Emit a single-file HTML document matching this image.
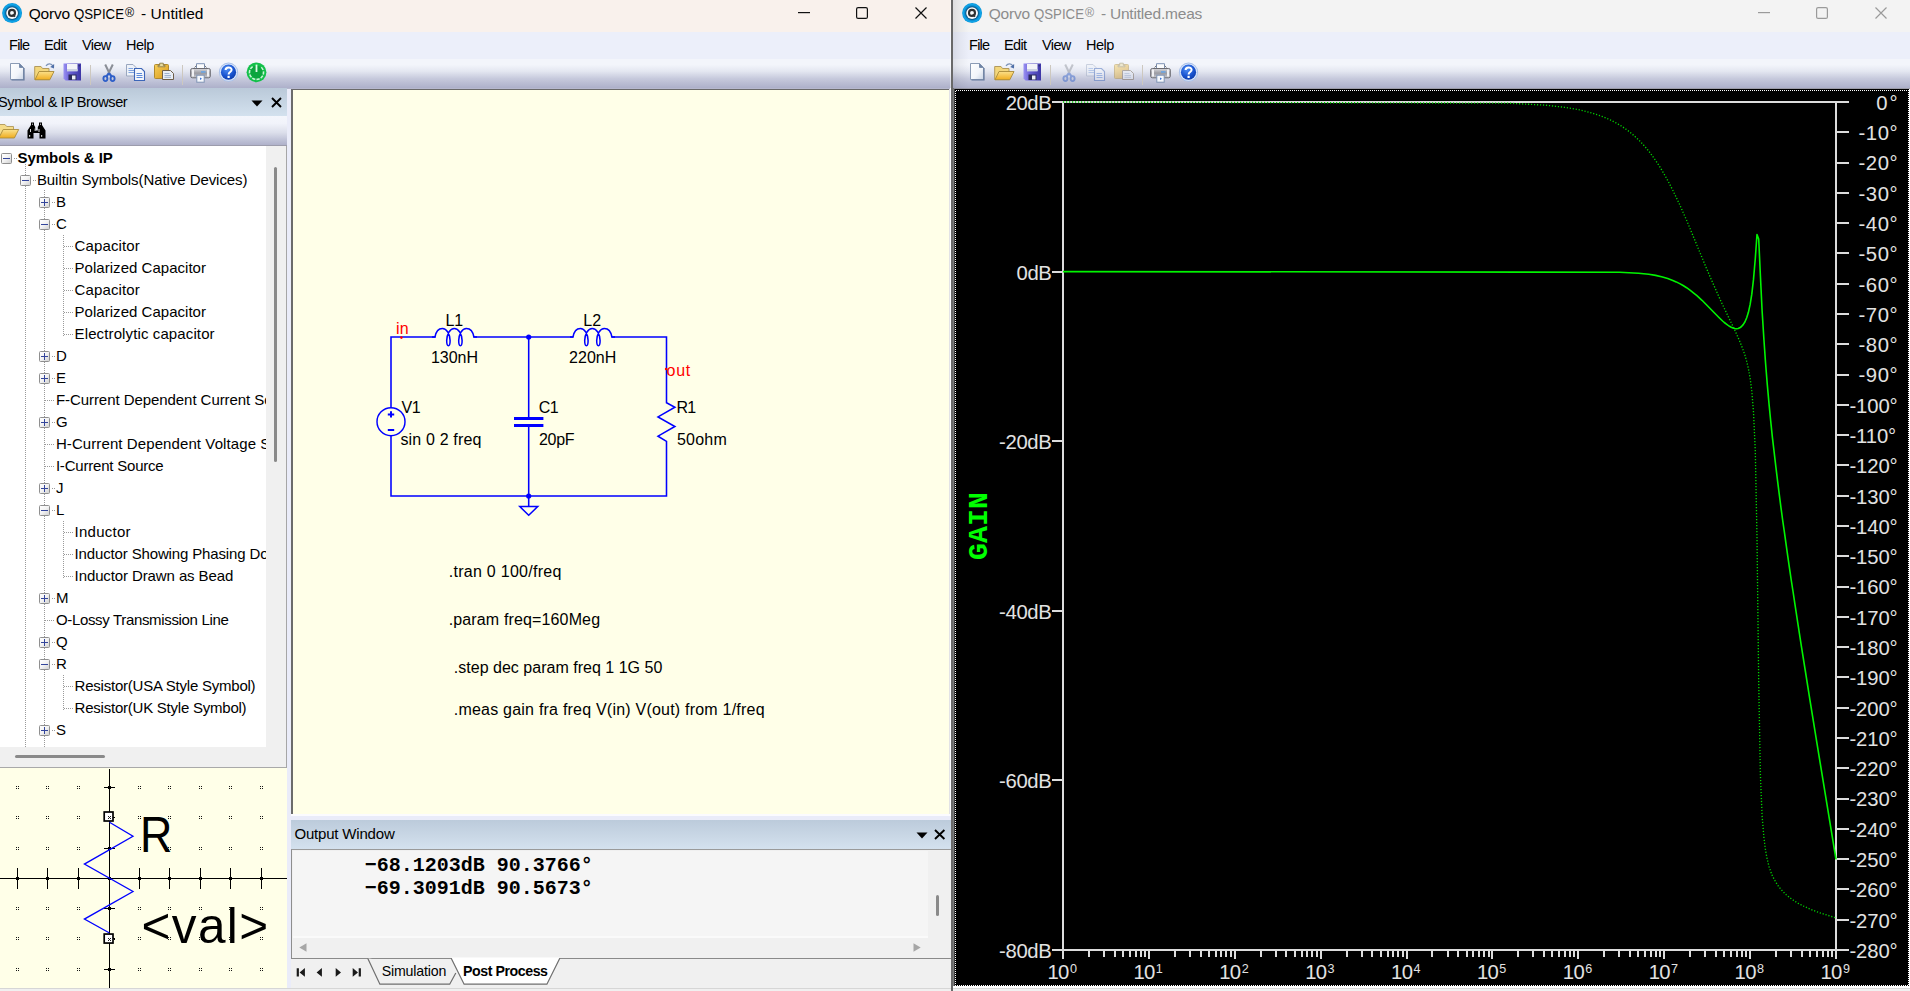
<!DOCTYPE html>
<html><head><meta charset="utf-8"><title>Qorvo QSPICE</title>
<style>
*{box-sizing:border-box;margin:0;padding:0}
html,body{width:1910px;height:991px;overflow:hidden;background:#f0f0f0}
body{position:relative;font-family:"Liberation Sans",sans-serif;font-size:15px;color:#000}
.a{position:absolute}
.t{position:absolute;white-space:nowrap;line-height:1}
.tb{top:59px;height:29px;background:linear-gradient(#f3f5fb 0,#f3f5fb 20%,#e4e7f1 42%,#c6c9dc 68%,#adb0ca 100%)}
svg{position:absolute;overflow:visible}
</style></head><body>
<!-- left window chrome -->
<div class="a" style="left:0px;top:0px;width:951px;height:32px;background:#f9f1ec;"></div>
<div class="a" style="left:0px;top:32px;width:951px;height:27px;background:#eceffa;"></div>
<div class="a tb" style="left:0;width:951px"></div>
<!-- right window chrome -->
<div class="a" style="left:953px;top:0px;width:957px;height:32px;background:#f3f3f3;"></div>
<div class="a" style="left:953px;top:32px;width:957px;height:27px;background:#eceffa;"></div>
<div class="a tb" style="left:953px;width:957px"></div>
<div class="a" style="left:950px;top:0px;width:1px;height:88px;background:rgba(255,255,255,0.45);"></div>
<div class="a" style="left:950px;top:88px;width:1px;height:726px;background:#fcfcff;"></div>
<div class="a" style="left:0px;top:88px;width:950px;height:1px;background:#b6b8ce;"></div>
<div class="a" style="left:954px;top:88px;width:956px;height:1px;background:#9c9ca8;"></div>
<div class="a" style="left:951px;top:0px;width:2px;height:991px;background:#696969;"></div>
<div class="a" style="left:953px;top:88px;width:1px;height:903px;background:#7c7c7c;"></div>
<div class="a" style="left:953px;top:0px;width:16px;height:89px;background:linear-gradient(90deg,rgba(0,0,20,0.085),rgba(0,0,20,0.04) 45%,rgba(0,0,0,0));"></div>
<svg style="left:1.8000000000000007px;top:2.8000000000000007px" width="20.2" height="20.2" viewBox="0 0 20.2 20.2">
<defs><radialGradient id="lg11.9" cx="50%" cy="50%" r="50%"><stop offset="0.55" stop-color="#07395e"/><stop offset="0.72" stop-color="#0a86c9"/><stop offset="0.86" stop-color="#0fa6ea"/><stop offset="1" stop-color="#0b93d6"/></radialGradient></defs>
<circle cx="10.1" cy="10.1" r="10" fill="url(#lg11.9)"/>
<circle cx="10.1" cy="10.1" r="5.9" fill="#f7fbfd"/>
<circle cx="10" cy="9.9" r="3" fill="none" stroke="#2f3133" stroke-width="2.1"/>
<path d="M10.9 11.2 L12.9 13.8" stroke="#2f3133" stroke-width="1.7"/>
</svg>
<svg style="left:961.8px;top:2.8000000000000007px" width="20.2" height="20.2" viewBox="0 0 20.2 20.2">
<defs><radialGradient id="lg971.9" cx="50%" cy="50%" r="50%"><stop offset="0.55" stop-color="#07395e"/><stop offset="0.72" stop-color="#0a86c9"/><stop offset="0.86" stop-color="#0fa6ea"/><stop offset="1" stop-color="#0b93d6"/></radialGradient></defs>
<circle cx="10.1" cy="10.1" r="10" fill="url(#lg971.9)"/>
<circle cx="10.1" cy="10.1" r="5.9" fill="#f7fbfd"/>
<circle cx="10" cy="9.9" r="3" fill="none" stroke="#2f3133" stroke-width="2.1"/>
<path d="M10.9 11.2 L12.9 13.8" stroke="#2f3133" stroke-width="1.7"/>
</svg>
<div class="t" style="left:28.70px;top:6.05px;font-size:15.5px;letter-spacing:-0.202px;">Qorvo</div>
<div class="t" style="left:73.80px;top:6.05px;font-size:15.5px;transform:scaleX(0.8536);transform-origin:0 0;">QSPICE</div>
<div class="t" style="left:124.90px;top:7.10px;font-size:12.4px;">®</div>
<div class="t" style="left:140.90px;top:6.05px;font-size:15.5px;letter-spacing:0.058px;">- Untitled</div>
<div class="t" style="left:988.70px;top:6.05px;font-size:15.5px;color:#8c8c8c;letter-spacing:-0.202px;">Qorvo</div>
<div class="t" style="left:1033.80px;top:6.05px;font-size:15.5px;color:#8c8c8c;transform:scaleX(0.8536);transform-origin:0 0;">QSPICE</div>
<div class="t" style="left:1084.90px;top:7.10px;font-size:12.4px;color:#8c8c8c;">®</div>
<div class="t" style="left:1100.90px;top:6.05px;font-size:15.5px;color:#8c8c8c;letter-spacing:-0.202px;">- Untitled.meas</div>
<div class="t" style="left:9.10px;top:38.05px;font-size:14.5px;letter-spacing:-0.791px;">File</div>
<div class="t" style="left:44.00px;top:38.05px;font-size:14.5px;letter-spacing:-0.647px;">Edit</div>
<div class="t" style="left:82.10px;top:38.05px;font-size:14.5px;letter-spacing:-0.642px;">View</div>
<div class="t" style="left:126.00px;top:38.05px;font-size:14.5px;letter-spacing:-0.481px;">Help</div>
<div class="t" style="left:969.10px;top:38.05px;font-size:14.5px;letter-spacing:-0.791px;">File</div>
<div class="t" style="left:1004.00px;top:38.05px;font-size:14.5px;letter-spacing:-0.647px;">Edit</div>
<div class="t" style="left:1042.10px;top:38.05px;font-size:14.5px;letter-spacing:-0.642px;">View</div>
<div class="t" style="left:1086.00px;top:38.05px;font-size:14.5px;letter-spacing:-0.481px;">Help</div>
<svg style="left:798px;top:12px" width="13" height="2"><rect x="0" y="0" width="12" height="1.2" fill="#111"/></svg>
<svg style="left:856px;top:7px" width="13" height="13"><rect x="0.6" y="0.6" width="10.8" height="10.8" rx="1.5" fill="none" stroke="#111" stroke-width="1.2"/></svg>
<svg style="left:915px;top:7px" width="13" height="13"><path d="M0.5 0.5 L11.5 11.5 M11.5 0.5 L0.5 11.5" stroke="#111" stroke-width="1.2" fill="none"/></svg>
<svg style="left:1758px;top:12px" width="13" height="2"><rect x="0" y="0" width="12" height="1.2" fill="#9a9a9a"/></svg>
<svg style="left:1816px;top:7px" width="13" height="13"><rect x="0.6" y="0.6" width="10.8" height="10.8" rx="1.5" fill="none" stroke="#9a9a9a" stroke-width="1.2"/></svg>
<svg style="left:1875px;top:7px" width="13" height="13"><path d="M0.5 0.5 L11.5 11.5 M11.5 0.5 L0.5 11.5" stroke="#9a9a9a" stroke-width="1.2" fill="none"/></svg>
<svg style="left:10px;top:63px" width="15" height="18" viewBox="0 0 15 18">
<defs><linearGradient id="nd0" x1="0" y1="0" x2="1" y2="1"><stop offset="0" stop-color="#ffffff"/><stop offset="0.6" stop-color="#f2f5fa"/><stop offset="1" stop-color="#c9d3e4"/></linearGradient></defs>
<path d="M0.5 0.5 H9.5 L13.5 4.5 V16.5 H0.5 Z" fill="url(#nd0)" stroke="#8b9bb5" stroke-width="1"/>
<path d="M9.5 0.5 V4.5 H13.5" fill="#6f84a6" stroke="#6f84a6" stroke-width="0.8"/>
<path d="M14 5 V17 H1.5" fill="none" stroke="#62779b" stroke-width="1.2"/>
</svg>
<svg style="left:34px;top:62px" width="21" height="19" viewBox="0 0 21 19">
<defs><linearGradient id="of0" x1="0" y1="0" x2="0" y2="1"><stop offset="0" stop-color="#fbe08a"/><stop offset="1" stop-color="#f0ad1e"/></linearGradient></defs>
<path d="M0.7 4.5 H7 L8.5 6.5 H15 V17.5 H0.7 Z" fill="#f3d77c" stroke="#b39b5d" stroke-width="1"/>
<path d="M5 9.5 H20 L15.8 17.8 H1 Z" fill="url(#of0)" stroke="#a88a3a" stroke-width="0.9"/>
<path d="M12 3.8 C14 1.2 17.5 1.4 19 4.2" fill="none" stroke="#7b93b8" stroke-width="1.3"/>
<path d="M20.2 2 L20 6.4 L16.2 5 Z" fill="#4f6fa8"/>
</svg>
<svg style="left:63px;top:63px" width="19" height="18" viewBox="0 0 19 18">
<defs><linearGradient id="sv0" x1="0" y1="0" x2="1" y2="0"><stop offset="0" stop-color="#9a92f2"/><stop offset="0.35" stop-color="#6a60d6"/><stop offset="1" stop-color="#3d36a6"/></linearGradient></defs>
<path d="M0.5 0.5 H18 V17.5 H2.5 L0.5 15.5 Z" fill="url(#sv0)"/>
<rect x="4" y="1" width="10.5" height="7.2" fill="#f3f4f8"/>
<rect x="4" y="6" width="10.5" height="2.2" fill="#ccd2e2"/>
<rect x="5.5" y="11.5" width="8" height="5.5" fill="#2b2b5a"/>
<rect x="9" y="12.5" width="3.5" height="4" fill="#eceef6"/>
<rect x="15.6" y="2" width="1.2" height="1.4" fill="#2b2b6a"/>
</svg>
<div class="a" style="left:90px;top:65px;width:1px;height:20px;background:#cdc8bf;"></div>
<svg style="left:102px;top:64px" width="14" height="19" viewBox="0 0 14 19">
<path d="M3.2 0.5 L7.8 10 M10.8 0.5 L6.2 10" stroke="#8a8e96" stroke-width="2" fill="none"/>
<ellipse cx="3.4" cy="14.6" rx="2" ry="2.5" fill="none" stroke="#2f5fc8" stroke-width="1.9"/>
<ellipse cx="10.6" cy="14.6" rx="2" ry="2.5" fill="none" stroke="#2f5fc8" stroke-width="1.9"/>
<path d="M7 9.3 L4.3 12.4 M7 9.3 L9.7 12.4" stroke="#2f5fc8" stroke-width="2.2"/>
</svg>
<svg style="left:126px;top:64px" width="20" height="17" viewBox="0 0 20 17">
<path d="M0.5 0.5 H7 L10 3.5 V12 H0.5 Z" fill="#eef2f9" stroke="#9aa7bf" stroke-width="1"/>
<path d="M2.5 4.5 H7 M2.5 6.5 H8 M2.5 8.5 H8" stroke="#7fa3de" stroke-width="1"/>
<path d="M8.5 4.5 H15.5 L18.5 7.5 V16.5 H8.5 Z" fill="#f4f7fc" stroke="#3d66b8" stroke-width="1.1"/>
<path d="M10.5 9.5 H16 M10.5 11.5 H16.5 M10.5 13.5 H16.5" stroke="#5c8ada" stroke-width="1.1"/>
</svg>
<svg style="left:154px;top:62px" width="21" height="19" viewBox="0 0 21 19">
<defs><linearGradient id="ps0" x1="0" y1="0" x2="1" y2="1"><stop offset="0" stop-color="#f6cf5a"/><stop offset="1" stop-color="#d9991a"/></linearGradient></defs>
<rect x="0.5" y="2.5" width="14" height="14" rx="1" fill="url(#ps0)" stroke="#b08a2e" stroke-width="1"/>
<path d="M4 4.8 H11 V3.4 H9.3 V1.2 H5.7 V3.4 H4 Z" fill="#e8dca0" stroke="#8d7d48" stroke-width="0.9"/>
<path d="M8.5 8.5 H16.5 L19.5 11.5 V17.5 H8.5 Z" fill="#e9eef6" stroke="#6f5f4a" stroke-width="1"/>
<path d="M10.5 11.5 H15.5 M10.5 13.5 H17 M10.5 15.3 H17" stroke="#9fb2cf" stroke-width="1"/>
</svg>
<div class="a" style="left:182px;top:65px;width:1px;height:20px;background:#cdc8bf;"></div>
<svg style="left:190px;top:63px" width="21" height="20" viewBox="0 0 21 20">
<defs><linearGradient id="pr0" x1="0" y1="0" x2="0" y2="1"><stop offset="0" stop-color="#d8d8dc"/><stop offset="0.5" stop-color="#9b9ba2"/><stop offset="1" stop-color="#c9c9cf"/></linearGradient></defs>
<path d="M6.5 0.7 H14.5 V6 H6.5 Z" fill="#fbfcfe" stroke="#7f93b4" stroke-width="1"/>
<path d="M4.5 4.5 L6.5 2.5 M16.5 4.5 L14.5 2.5" stroke="#777" stroke-width="1"/>
<rect x="0.7" y="5.5" width="19.6" height="9.3" rx="1.6" fill="url(#pr0)" stroke="#6b6b72" stroke-width="1"/>
<rect x="1.8" y="6.5" width="2.2" height="7" fill="#f1f1f4"/><rect x="17" y="6.5" width="2.2" height="7" fill="#f1f1f4"/>
<rect x="11" y="8.3" width="4.6" height="1.3" fill="#5aa2ee"/>
<rect x="6.8" y="12.2" width="7.4" height="7" fill="#f7f9fd" stroke="#7f93b4" stroke-width="1"/>
<path d="M10 14.5 L12 15.8 L10 17 Z" fill="#3a74d8"/>
</svg>
<svg style="left:218px;top:62px" width="21" height="21" viewBox="0 0 21 21">
<defs><radialGradient id="hp0" cx="40%" cy="30%" r="75%"><stop offset="0" stop-color="#4f8ff5"/><stop offset="0.6" stop-color="#1a54d0"/><stop offset="1" stop-color="#0c3ba8"/></radialGradient></defs>
<circle cx="10.5" cy="10.2" r="9.6" fill="#a9c1ea"/>
<circle cx="10.5" cy="10.2" r="8.6" fill="#dfe9fb"/>
<circle cx="10.5" cy="10.2" r="7.6" fill="url(#hp0)"/>
<path d="M7.6 8 C7.6 4.6 13.6 4.6 13.6 7.8 C13.6 10 10.6 10 10.6 12.4" fill="none" stroke="#fff" stroke-width="2"/>
<rect x="9.5" y="13.8" width="2.2" height="2.2" fill="#fff"/>
</svg>
<svg style="left:246px;top:62px" width="21" height="21" viewBox="0 0 21 21">
<circle cx="10.5" cy="10.3" r="9.9" fill="#13c04a"/>
<circle cx="10.5" cy="10.3" r="6.6" fill="#0ca53e"/>
<path d="M6.6 4.6 A7 7 0 1 0 14.4 4.6" fill="none" stroke="#c9f5d6" stroke-width="1.6" stroke-dasharray="3.2 1.2"/>
<path d="M10.5 2.6 V10" stroke="#dffbe8" stroke-width="1.8"/>
</svg>
<svg style="left:970px;top:63px" width="15" height="18" viewBox="0 0 15 18">
<defs><linearGradient id="nd960" x1="0" y1="0" x2="1" y2="1"><stop offset="0" stop-color="#ffffff"/><stop offset="0.6" stop-color="#f2f5fa"/><stop offset="1" stop-color="#c9d3e4"/></linearGradient></defs>
<path d="M0.5 0.5 H9.5 L13.5 4.5 V16.5 H0.5 Z" fill="url(#nd960)" stroke="#8b9bb5" stroke-width="1"/>
<path d="M9.5 0.5 V4.5 H13.5" fill="#6f84a6" stroke="#6f84a6" stroke-width="0.8"/>
<path d="M14 5 V17 H1.5" fill="none" stroke="#62779b" stroke-width="1.2"/>
</svg>
<svg style="left:994px;top:62px" width="21" height="19" viewBox="0 0 21 19">
<defs><linearGradient id="of960" x1="0" y1="0" x2="0" y2="1"><stop offset="0" stop-color="#fbe08a"/><stop offset="1" stop-color="#f0ad1e"/></linearGradient></defs>
<path d="M0.7 4.5 H7 L8.5 6.5 H15 V17.5 H0.7 Z" fill="#f3d77c" stroke="#b39b5d" stroke-width="1"/>
<path d="M5 9.5 H20 L15.8 17.8 H1 Z" fill="url(#of960)" stroke="#a88a3a" stroke-width="0.9"/>
<path d="M12 3.8 C14 1.2 17.5 1.4 19 4.2" fill="none" stroke="#7b93b8" stroke-width="1.3"/>
<path d="M20.2 2 L20 6.4 L16.2 5 Z" fill="#4f6fa8"/>
</svg>
<svg style="left:1023px;top:63px" width="19" height="18" viewBox="0 0 19 18">
<defs><linearGradient id="sv960" x1="0" y1="0" x2="1" y2="0"><stop offset="0" stop-color="#9a92f2"/><stop offset="0.35" stop-color="#6a60d6"/><stop offset="1" stop-color="#3d36a6"/></linearGradient></defs>
<path d="M0.5 0.5 H18 V17.5 H2.5 L0.5 15.5 Z" fill="url(#sv960)"/>
<rect x="4" y="1" width="10.5" height="7.2" fill="#f3f4f8"/>
<rect x="4" y="6" width="10.5" height="2.2" fill="#ccd2e2"/>
<rect x="5.5" y="11.5" width="8" height="5.5" fill="#2b2b5a"/>
<rect x="9" y="12.5" width="3.5" height="4" fill="#eceef6"/>
<rect x="15.6" y="2" width="1.2" height="1.4" fill="#2b2b6a"/>
</svg>
<div class="a" style="left:1050px;top:65px;width:1px;height:20px;background:#cdc8bf;"></div>
<svg style="left:1062px;top:64px" width="14" height="19" viewBox="0 0 14 19" opacity="0.45">
<path d="M3.2 0.5 L7.8 10 M10.8 0.5 L6.2 10" stroke="#8a8e96" stroke-width="2" fill="none"/>
<ellipse cx="3.4" cy="14.6" rx="2" ry="2.5" fill="none" stroke="#2f5fc8" stroke-width="1.9"/>
<ellipse cx="10.6" cy="14.6" rx="2" ry="2.5" fill="none" stroke="#2f5fc8" stroke-width="1.9"/>
<path d="M7 9.3 L4.3 12.4 M7 9.3 L9.7 12.4" stroke="#2f5fc8" stroke-width="2.2"/>
</svg>
<svg style="left:1086px;top:64px" width="20" height="17" viewBox="0 0 20 17" opacity="0.45">
<path d="M0.5 0.5 H7 L10 3.5 V12 H0.5 Z" fill="#eef2f9" stroke="#9aa7bf" stroke-width="1"/>
<path d="M2.5 4.5 H7 M2.5 6.5 H8 M2.5 8.5 H8" stroke="#7fa3de" stroke-width="1"/>
<path d="M8.5 4.5 H15.5 L18.5 7.5 V16.5 H8.5 Z" fill="#f4f7fc" stroke="#3d66b8" stroke-width="1.1"/>
<path d="M10.5 9.5 H16 M10.5 11.5 H16.5 M10.5 13.5 H16.5" stroke="#5c8ada" stroke-width="1.1"/>
</svg>
<svg style="left:1114px;top:62px" width="21" height="19" viewBox="0 0 21 19" opacity="0.45">
<defs><linearGradient id="ps960" x1="0" y1="0" x2="1" y2="1"><stop offset="0" stop-color="#f6cf5a"/><stop offset="1" stop-color="#d9991a"/></linearGradient></defs>
<rect x="0.5" y="2.5" width="14" height="14" rx="1" fill="url(#ps960)" stroke="#b08a2e" stroke-width="1"/>
<path d="M4 4.8 H11 V3.4 H9.3 V1.2 H5.7 V3.4 H4 Z" fill="#e8dca0" stroke="#8d7d48" stroke-width="0.9"/>
<path d="M8.5 8.5 H16.5 L19.5 11.5 V17.5 H8.5 Z" fill="#e9eef6" stroke="#6f5f4a" stroke-width="1"/>
<path d="M10.5 11.5 H15.5 M10.5 13.5 H17 M10.5 15.3 H17" stroke="#9fb2cf" stroke-width="1"/>
</svg>
<div class="a" style="left:1142px;top:65px;width:1px;height:20px;background:#cdc8bf;"></div>
<svg style="left:1150px;top:63px" width="21" height="20" viewBox="0 0 21 20">
<defs><linearGradient id="pr960" x1="0" y1="0" x2="0" y2="1"><stop offset="0" stop-color="#d8d8dc"/><stop offset="0.5" stop-color="#9b9ba2"/><stop offset="1" stop-color="#c9c9cf"/></linearGradient></defs>
<path d="M6.5 0.7 H14.5 V6 H6.5 Z" fill="#fbfcfe" stroke="#7f93b4" stroke-width="1"/>
<path d="M4.5 4.5 L6.5 2.5 M16.5 4.5 L14.5 2.5" stroke="#777" stroke-width="1"/>
<rect x="0.7" y="5.5" width="19.6" height="9.3" rx="1.6" fill="url(#pr960)" stroke="#6b6b72" stroke-width="1"/>
<rect x="1.8" y="6.5" width="2.2" height="7" fill="#f1f1f4"/><rect x="17" y="6.5" width="2.2" height="7" fill="#f1f1f4"/>
<rect x="11" y="8.3" width="4.6" height="1.3" fill="#5aa2ee"/>
<rect x="6.8" y="12.2" width="7.4" height="7" fill="#f7f9fd" stroke="#7f93b4" stroke-width="1"/>
<path d="M10 14.5 L12 15.8 L10 17 Z" fill="#3a74d8"/>
</svg>
<svg style="left:1178px;top:62px" width="21" height="21" viewBox="0 0 21 21">
<defs><radialGradient id="hp960" cx="40%" cy="30%" r="75%"><stop offset="0" stop-color="#4f8ff5"/><stop offset="0.6" stop-color="#1a54d0"/><stop offset="1" stop-color="#0c3ba8"/></radialGradient></defs>
<circle cx="10.5" cy="10.2" r="9.6" fill="#a9c1ea"/>
<circle cx="10.5" cy="10.2" r="8.6" fill="#dfe9fb"/>
<circle cx="10.5" cy="10.2" r="7.6" fill="url(#hp960)"/>
<path d="M7.6 8 C7.6 4.6 13.6 4.6 13.6 7.8 C13.6 10 10.6 10 10.6 12.4" fill="none" stroke="#fff" stroke-width="2"/>
<rect x="9.5" y="13.8" width="2.2" height="2.2" fill="#fff"/>
</svg>
<!-- left dock panel -->
<div class="a" style="left:0px;top:88px;width:287px;height:28px;background:linear-gradient(#bac9d9,#d3e1ee);"></div>
<div class="t" style="left:-2.00px;top:95.00px;font-size:14.6px;letter-spacing:-0.441px;">Symbol &amp; IP Browser</div>
<svg style="left:251.3px;top:100px" width="13" height="7"><path d="M0.5 0.5 H11.5 L6 6.5 Z" fill="#000"/></svg>
<svg style="left:271px;top:97px" width="11" height="11"><path d="M1 1 L10 10 M10 1 L1 10" stroke="#000" stroke-width="1.9" fill="none"/></svg>
<div class="a" style="left:0px;top:116px;width:287px;height:30px;background:linear-gradient(#f4f6fc 0,#f1f3fa 25%,#dcdfeb 55%,#bfc2d7 80%,#acaec8 100%);"></div>
<div class="a" style="left:0px;top:145px;width:287px;height:1px;background:#9c9cac;"></div>
<svg style="left:-2px;top:123px" width="22" height="16" viewBox="0 0 22 16">
<defs><linearGradient id="sf1" x1="0" y1="0" x2="0" y2="1"><stop offset="0" stop-color="#fbe28e"/><stop offset="1" stop-color="#efab1c"/></linearGradient></defs>
<path d="M0.5 1.5 H7 L8.7 3.5 H15.5 V14.5 H0.5 Z" fill="#f5dc8a" stroke="#b7a064" stroke-width="1"/>
<path d="M5.2 6.5 H20.7 L16.4 15 H0.8 Z" fill="url(#sf1)" stroke="#a98c3c" stroke-width="0.9"/>
</svg>
<svg style="left:27px;top:122px" width="19" height="17" viewBox="0 0 19 17">
<path d="M4 0.5 H7 V3 L8.2 5 V8.5 H10.8 V5 L12 3 V0.5 H15 V3 L18.5 8.5 V16.5 H12.5 V11 H6.5 V16.5 H0.5 V8.5 L4 3 Z" fill="#000"/>
<rect x="5" y="1.5" width="1" height="1.5" fill="#aaa"/><rect x="13" y="1.5" width="1" height="1.5" fill="#aaa"/>
<rect x="3" y="7" width="1" height="3" fill="#ddd"/><rect x="11.5" y="7" width="1" height="3" fill="#ddd"/>
<rect x="2" y="13" width="1.2" height="1.8" fill="#ccc"/><rect x="14" y="13" width="1.2" height="1.8" fill="#ccc"/>
<rect x="7.6" y="6.5" width="1" height="2.5" fill="#bbb"/>
</svg>
<div class="a" style="left:266px;top:146px;width:21px;height:622px;background:#f0f0f0;"></div>
<div class="a" style="left:0px;top:746px;width:287px;height:22px;background:#f0f0f0;"></div>
<div class="a" style="left:0;top:146px;width:266px;height:601px;background:#fff;overflow:hidden">
<div class="a" style="left:25.0px;top:18px;width:1px;height:11px;background:repeating-linear-gradient(#9a9a9a 0,#9a9a9a 1px,transparent 1px,transparent 2px)"></div>
<div class="a" style="left:25.0px;top:40px;width:1px;height:561px;background:repeating-linear-gradient(#9a9a9a 0,#9a9a9a 1px,transparent 1px,transparent 2px)"></div>
<div class="a" style="left:44.0px;top:44px;width:1px;height:557px;background:repeating-linear-gradient(#9a9a9a 0,#9a9a9a 1px,transparent 1px,transparent 2px)"></div>
<div class="a" style="left:63.0px;top:88.5px;width:1px;height:101.0px;background:repeating-linear-gradient(#9a9a9a 0,#9a9a9a 1px,transparent 1px,transparent 2px)"></div>
<div class="a" style="left:63.0px;top:374.5px;width:1px;height:57.0px;background:repeating-linear-gradient(#9a9a9a 0,#9a9a9a 1px,transparent 1px,transparent 2px)"></div>
<div class="a" style="left:63.0px;top:528.5px;width:1px;height:35.0px;background:repeating-linear-gradient(#9a9a9a 0,#9a9a9a 1px,transparent 1px,transparent 2px)"></div>
<div class="a" style="left:1.0px;top:7.0px;width:11px;height:11px;border:1px solid #8f8f8f;border-radius:1.5px;background:linear-gradient(135deg,#fff 0,#f4f4f4 45%,#d2d2d2 100%)"></div>
<div class="a" style="left:3.0px;top:12.0px;width:7px;height:1px;background:#33459b;"></div>
<div class="a" style="left:13.5px;top:12.0px;width:3.0px;height:1px;background:repeating-linear-gradient(90deg,#9a9a9a 0,#9a9a9a 1px,transparent 1px,transparent 2px)"></div>
<div class="t" style="left:17.60px;top:4.30px;font-size:15px;font-weight:bold;letter-spacing:-0.055px;">Symbols &amp; IP</div>
<div class="a" style="left:20.0px;top:29.0px;width:11px;height:11px;border:1px solid #8f8f8f;border-radius:1.5px;background:linear-gradient(135deg,#fff 0,#f4f4f4 45%,#d2d2d2 100%)"></div>
<div class="a" style="left:22.0px;top:34.0px;width:7px;height:1px;background:#33459b;"></div>
<div class="a" style="left:32.5px;top:34.0px;width:3.0px;height:1px;background:repeating-linear-gradient(90deg,#9a9a9a 0,#9a9a9a 1px,transparent 1px,transparent 2px)"></div>
<div class="t" style="left:36.90px;top:26.30px;font-size:15px;letter-spacing:-0.064px;">Builtin Symbols(Native Devices)</div>
<div class="a" style="left:39.0px;top:51.0px;width:11px;height:11px;border:1px solid #8f8f8f;border-radius:1.5px;background:linear-gradient(135deg,#fff 0,#f4f4f4 45%,#d2d2d2 100%)"></div>
<div class="a" style="left:41.0px;top:56.0px;width:7px;height:1px;background:#33459b;"></div>
<div class="a" style="left:44.0px;top:53.0px;width:1px;height:7px;background:#33459b;"></div>
<div class="a" style="left:51.5px;top:56.0px;width:3.0px;height:1px;background:repeating-linear-gradient(90deg,#9a9a9a 0,#9a9a9a 1px,transparent 1px,transparent 2px)"></div>
<div class="t" style="left:55.90px;top:48.30px;font-size:15px;letter-spacing:0.000px;">B</div>
<div class="a" style="left:39.0px;top:73.0px;width:11px;height:11px;border:1px solid #8f8f8f;border-radius:1.5px;background:linear-gradient(135deg,#fff 0,#f4f4f4 45%,#d2d2d2 100%)"></div>
<div class="a" style="left:41.0px;top:78.0px;width:7px;height:1px;background:#33459b;"></div>
<div class="a" style="left:51.5px;top:78.0px;width:3.0px;height:1px;background:repeating-linear-gradient(90deg,#9a9a9a 0,#9a9a9a 1px,transparent 1px,transparent 2px)"></div>
<div class="t" style="left:55.90px;top:70.30px;font-size:15px;letter-spacing:0.000px;">C</div>
<div class="a" style="left:63.5px;top:100.0px;width:9.0px;height:1px;background:repeating-linear-gradient(90deg,#9a9a9a 0,#9a9a9a 1px,transparent 1px,transparent 2px)"></div>
<div class="t" style="left:74.60px;top:92.30px;font-size:15px;letter-spacing:0.111px;">Capacitor</div>
<div class="a" style="left:63.5px;top:122.0px;width:9.0px;height:1px;background:repeating-linear-gradient(90deg,#9a9a9a 0,#9a9a9a 1px,transparent 1px,transparent 2px)"></div>
<div class="t" style="left:74.60px;top:114.30px;font-size:15px;letter-spacing:0.026px;">Polarized Capacitor</div>
<div class="a" style="left:63.5px;top:144.0px;width:9.0px;height:1px;background:repeating-linear-gradient(90deg,#9a9a9a 0,#9a9a9a 1px,transparent 1px,transparent 2px)"></div>
<div class="t" style="left:74.60px;top:136.30px;font-size:15px;letter-spacing:0.111px;">Capacitor</div>
<div class="a" style="left:63.5px;top:166.0px;width:9.0px;height:1px;background:repeating-linear-gradient(90deg,#9a9a9a 0,#9a9a9a 1px,transparent 1px,transparent 2px)"></div>
<div class="t" style="left:74.60px;top:158.30px;font-size:15px;letter-spacing:0.026px;">Polarized Capacitor</div>
<div class="a" style="left:63.5px;top:188.0px;width:9.0px;height:1px;background:repeating-linear-gradient(90deg,#9a9a9a 0,#9a9a9a 1px,transparent 1px,transparent 2px)"></div>
<div class="t" style="left:74.60px;top:180.30px;font-size:15px;letter-spacing:0.116px;">Electrolytic capacitor</div>
<div class="a" style="left:39.0px;top:205.0px;width:11px;height:11px;border:1px solid #8f8f8f;border-radius:1.5px;background:linear-gradient(135deg,#fff 0,#f4f4f4 45%,#d2d2d2 100%)"></div>
<div class="a" style="left:41.0px;top:210.0px;width:7px;height:1px;background:#33459b;"></div>
<div class="a" style="left:44.0px;top:207.0px;width:1px;height:7px;background:#33459b;"></div>
<div class="a" style="left:51.5px;top:210.0px;width:3.0px;height:1px;background:repeating-linear-gradient(90deg,#9a9a9a 0,#9a9a9a 1px,transparent 1px,transparent 2px)"></div>
<div class="t" style="left:55.90px;top:202.30px;font-size:15px;letter-spacing:0.000px;">D</div>
<div class="a" style="left:39.0px;top:227.0px;width:11px;height:11px;border:1px solid #8f8f8f;border-radius:1.5px;background:linear-gradient(135deg,#fff 0,#f4f4f4 45%,#d2d2d2 100%)"></div>
<div class="a" style="left:41.0px;top:232.0px;width:7px;height:1px;background:#33459b;"></div>
<div class="a" style="left:44.0px;top:229.0px;width:1px;height:7px;background:#33459b;"></div>
<div class="a" style="left:51.5px;top:232.0px;width:3.0px;height:1px;background:repeating-linear-gradient(90deg,#9a9a9a 0,#9a9a9a 1px,transparent 1px,transparent 2px)"></div>
<div class="t" style="left:55.90px;top:224.30px;font-size:15px;letter-spacing:0.000px;">E</div>
<div class="a" style="left:44.5px;top:254.0px;width:10.0px;height:1px;background:repeating-linear-gradient(90deg,#9a9a9a 0,#9a9a9a 1px,transparent 1px,transparent 2px)"></div>
<div class="t" style="left:55.90px;top:246.30px;font-size:15px;letter-spacing:-0.059px;">F-Current Dependent Current Source</div>
<div class="a" style="left:39.0px;top:271.0px;width:11px;height:11px;border:1px solid #8f8f8f;border-radius:1.5px;background:linear-gradient(135deg,#fff 0,#f4f4f4 45%,#d2d2d2 100%)"></div>
<div class="a" style="left:41.0px;top:276.0px;width:7px;height:1px;background:#33459b;"></div>
<div class="a" style="left:44.0px;top:273.0px;width:1px;height:7px;background:#33459b;"></div>
<div class="a" style="left:51.5px;top:276.0px;width:3.0px;height:1px;background:repeating-linear-gradient(90deg,#9a9a9a 0,#9a9a9a 1px,transparent 1px,transparent 2px)"></div>
<div class="t" style="left:55.90px;top:268.30px;font-size:15px;letter-spacing:0.000px;">G</div>
<div class="a" style="left:44.5px;top:298.0px;width:10.0px;height:1px;background:repeating-linear-gradient(90deg,#9a9a9a 0,#9a9a9a 1px,transparent 1px,transparent 2px)"></div>
<div class="t" style="left:55.90px;top:290.30px;font-size:15px;letter-spacing:0.095px;">H-Current Dependent Voltage Source</div>
<div class="a" style="left:44.5px;top:320.0px;width:10.0px;height:1px;background:repeating-linear-gradient(90deg,#9a9a9a 0,#9a9a9a 1px,transparent 1px,transparent 2px)"></div>
<div class="t" style="left:55.90px;top:312.30px;font-size:15px;letter-spacing:-0.205px;">I-Current Source</div>
<div class="a" style="left:39.0px;top:337.0px;width:11px;height:11px;border:1px solid #8f8f8f;border-radius:1.5px;background:linear-gradient(135deg,#fff 0,#f4f4f4 45%,#d2d2d2 100%)"></div>
<div class="a" style="left:41.0px;top:342.0px;width:7px;height:1px;background:#33459b;"></div>
<div class="a" style="left:44.0px;top:339.0px;width:1px;height:7px;background:#33459b;"></div>
<div class="a" style="left:51.5px;top:342.0px;width:3.0px;height:1px;background:repeating-linear-gradient(90deg,#9a9a9a 0,#9a9a9a 1px,transparent 1px,transparent 2px)"></div>
<div class="t" style="left:55.90px;top:334.30px;font-size:15px;letter-spacing:0.000px;">J</div>
<div class="a" style="left:39.0px;top:359.0px;width:11px;height:11px;border:1px solid #8f8f8f;border-radius:1.5px;background:linear-gradient(135deg,#fff 0,#f4f4f4 45%,#d2d2d2 100%)"></div>
<div class="a" style="left:41.0px;top:364.0px;width:7px;height:1px;background:#33459b;"></div>
<div class="a" style="left:51.5px;top:364.0px;width:3.0px;height:1px;background:repeating-linear-gradient(90deg,#9a9a9a 0,#9a9a9a 1px,transparent 1px,transparent 2px)"></div>
<div class="t" style="left:55.90px;top:356.30px;font-size:15px;letter-spacing:0.000px;">L</div>
<div class="a" style="left:63.5px;top:386.0px;width:9.0px;height:1px;background:repeating-linear-gradient(90deg,#9a9a9a 0,#9a9a9a 1px,transparent 1px,transparent 2px)"></div>
<div class="t" style="left:74.60px;top:378.30px;font-size:15px;letter-spacing:0.250px;">Inductor</div>
<div class="a" style="left:63.5px;top:408.0px;width:9.0px;height:1px;background:repeating-linear-gradient(90deg,#9a9a9a 0,#9a9a9a 1px,transparent 1px,transparent 2px)"></div>
<div class="t" style="left:74.60px;top:400.30px;font-size:15px;letter-spacing:-0.144px;">Inductor Showing Phasing Dot</div>
<div class="a" style="left:63.5px;top:430.0px;width:9.0px;height:1px;background:repeating-linear-gradient(90deg,#9a9a9a 0,#9a9a9a 1px,transparent 1px,transparent 2px)"></div>
<div class="t" style="left:74.60px;top:422.30px;font-size:15px;letter-spacing:-0.106px;">Inductor Drawn as Bead</div>
<div class="a" style="left:39.0px;top:447.0px;width:11px;height:11px;border:1px solid #8f8f8f;border-radius:1.5px;background:linear-gradient(135deg,#fff 0,#f4f4f4 45%,#d2d2d2 100%)"></div>
<div class="a" style="left:41.0px;top:452.0px;width:7px;height:1px;background:#33459b;"></div>
<div class="a" style="left:44.0px;top:449.0px;width:1px;height:7px;background:#33459b;"></div>
<div class="a" style="left:51.5px;top:452.0px;width:3.0px;height:1px;background:repeating-linear-gradient(90deg,#9a9a9a 0,#9a9a9a 1px,transparent 1px,transparent 2px)"></div>
<div class="t" style="left:55.90px;top:444.30px;font-size:15px;letter-spacing:0.000px;">M</div>
<div class="a" style="left:44.5px;top:474.0px;width:10.0px;height:1px;background:repeating-linear-gradient(90deg,#9a9a9a 0,#9a9a9a 1px,transparent 1px,transparent 2px)"></div>
<div class="t" style="left:55.90px;top:466.30px;font-size:15px;letter-spacing:-0.332px;">O-Lossy Transmission Line</div>
<div class="a" style="left:39.0px;top:491.0px;width:11px;height:11px;border:1px solid #8f8f8f;border-radius:1.5px;background:linear-gradient(135deg,#fff 0,#f4f4f4 45%,#d2d2d2 100%)"></div>
<div class="a" style="left:41.0px;top:496.0px;width:7px;height:1px;background:#33459b;"></div>
<div class="a" style="left:44.0px;top:493.0px;width:1px;height:7px;background:#33459b;"></div>
<div class="a" style="left:51.5px;top:496.0px;width:3.0px;height:1px;background:repeating-linear-gradient(90deg,#9a9a9a 0,#9a9a9a 1px,transparent 1px,transparent 2px)"></div>
<div class="t" style="left:55.90px;top:488.30px;font-size:15px;letter-spacing:0.000px;">Q</div>
<div class="a" style="left:39.0px;top:513.0px;width:11px;height:11px;border:1px solid #8f8f8f;border-radius:1.5px;background:linear-gradient(135deg,#fff 0,#f4f4f4 45%,#d2d2d2 100%)"></div>
<div class="a" style="left:41.0px;top:518.0px;width:7px;height:1px;background:#33459b;"></div>
<div class="a" style="left:51.5px;top:518.0px;width:3.0px;height:1px;background:repeating-linear-gradient(90deg,#9a9a9a 0,#9a9a9a 1px,transparent 1px,transparent 2px)"></div>
<div class="t" style="left:55.90px;top:510.30px;font-size:15px;letter-spacing:0.000px;">R</div>
<div class="a" style="left:63.5px;top:540.0px;width:9.0px;height:1px;background:repeating-linear-gradient(90deg,#9a9a9a 0,#9a9a9a 1px,transparent 1px,transparent 2px)"></div>
<div class="t" style="left:74.60px;top:532.30px;font-size:15px;letter-spacing:-0.228px;">Resistor(USA Style Symbol)</div>
<div class="a" style="left:63.5px;top:562.0px;width:9.0px;height:1px;background:repeating-linear-gradient(90deg,#9a9a9a 0,#9a9a9a 1px,transparent 1px,transparent 2px)"></div>
<div class="t" style="left:74.60px;top:554.30px;font-size:15px;letter-spacing:-0.230px;">Resistor(UK Style Symbol)</div>
<div class="a" style="left:39.0px;top:579.0px;width:11px;height:11px;border:1px solid #8f8f8f;border-radius:1.5px;background:linear-gradient(135deg,#fff 0,#f4f4f4 45%,#d2d2d2 100%)"></div>
<div class="a" style="left:41.0px;top:584.0px;width:7px;height:1px;background:#33459b;"></div>
<div class="a" style="left:44.0px;top:581.0px;width:1px;height:7px;background:#33459b;"></div>
<div class="a" style="left:51.5px;top:584.0px;width:3.0px;height:1px;background:repeating-linear-gradient(90deg,#9a9a9a 0,#9a9a9a 1px,transparent 1px,transparent 2px)"></div>
<div class="t" style="left:55.90px;top:576.30px;font-size:15px;letter-spacing:0.000px;">S</div>
</div>
<div class="a" style="left:274px;top:167px;width:3px;height:295px;background:#8a8a8a;border-radius:1.5px;"></div>
<div class="a" style="left:15px;top:755px;width:90px;height:3px;background:#8a8a8a;border-radius:1.5px;"></div>
<div class="a" style="left:0px;top:767px;width:287px;height:1px;background:#a9a9a9;"></div>
<div class="a" style="left:286px;top:146px;width:1px;height:622px;background:#a6a6a6;"></div>
<div class="a" style="left:0;top:768px;width:287px;height:220px;background:#ffffe8;overflow:hidden">
<svg style="left:0;top:0" width="287" height="220" shape-rendering="crispEdges">
<rect x="16.0" y="18.0" width="1" height="1" fill="#161616"/><rect x="16.0" y="20.0" width="1" height="1" fill="#161616"/><rect x="18.0" y="18.0" width="1" height="1" fill="#161616"/><rect x="18.0" y="20.0" width="1" height="1" fill="#161616"/><rect x="16.0" y="48.0" width="1" height="1" fill="#161616"/><rect x="16.0" y="50.0" width="1" height="1" fill="#161616"/><rect x="18.0" y="48.0" width="1" height="1" fill="#161616"/><rect x="18.0" y="50.0" width="1" height="1" fill="#161616"/><rect x="16.0" y="79.0" width="1" height="1" fill="#161616"/><rect x="16.0" y="81.0" width="1" height="1" fill="#161616"/><rect x="18.0" y="79.0" width="1" height="1" fill="#161616"/><rect x="18.0" y="81.0" width="1" height="1" fill="#161616"/><rect x="16.0" y="139.0" width="1" height="1" fill="#161616"/><rect x="16.0" y="141.0" width="1" height="1" fill="#161616"/><rect x="18.0" y="139.0" width="1" height="1" fill="#161616"/><rect x="18.0" y="141.0" width="1" height="1" fill="#161616"/><rect x="16.0" y="169.0" width="1" height="1" fill="#161616"/><rect x="16.0" y="171.0" width="1" height="1" fill="#161616"/><rect x="18.0" y="169.0" width="1" height="1" fill="#161616"/><rect x="18.0" y="171.0" width="1" height="1" fill="#161616"/><rect x="16.0" y="200.0" width="1" height="1" fill="#161616"/><rect x="16.0" y="202.0" width="1" height="1" fill="#161616"/><rect x="18.0" y="200.0" width="1" height="1" fill="#161616"/><rect x="18.0" y="202.0" width="1" height="1" fill="#161616"/>
<rect x="46.0" y="18.0" width="1" height="1" fill="#161616"/><rect x="46.0" y="20.0" width="1" height="1" fill="#161616"/><rect x="48.0" y="18.0" width="1" height="1" fill="#161616"/><rect x="48.0" y="20.0" width="1" height="1" fill="#161616"/><rect x="46.0" y="48.0" width="1" height="1" fill="#161616"/><rect x="46.0" y="50.0" width="1" height="1" fill="#161616"/><rect x="48.0" y="48.0" width="1" height="1" fill="#161616"/><rect x="48.0" y="50.0" width="1" height="1" fill="#161616"/><rect x="46.0" y="79.0" width="1" height="1" fill="#161616"/><rect x="46.0" y="81.0" width="1" height="1" fill="#161616"/><rect x="48.0" y="79.0" width="1" height="1" fill="#161616"/><rect x="48.0" y="81.0" width="1" height="1" fill="#161616"/><rect x="46.0" y="139.0" width="1" height="1" fill="#161616"/><rect x="46.0" y="141.0" width="1" height="1" fill="#161616"/><rect x="48.0" y="139.0" width="1" height="1" fill="#161616"/><rect x="48.0" y="141.0" width="1" height="1" fill="#161616"/><rect x="46.0" y="169.0" width="1" height="1" fill="#161616"/><rect x="46.0" y="171.0" width="1" height="1" fill="#161616"/><rect x="48.0" y="169.0" width="1" height="1" fill="#161616"/><rect x="48.0" y="171.0" width="1" height="1" fill="#161616"/><rect x="46.0" y="200.0" width="1" height="1" fill="#161616"/><rect x="46.0" y="202.0" width="1" height="1" fill="#161616"/><rect x="48.0" y="200.0" width="1" height="1" fill="#161616"/><rect x="48.0" y="202.0" width="1" height="1" fill="#161616"/>
<rect x="77.0" y="18.0" width="1" height="1" fill="#161616"/><rect x="77.0" y="20.0" width="1" height="1" fill="#161616"/><rect x="79.0" y="18.0" width="1" height="1" fill="#161616"/><rect x="79.0" y="20.0" width="1" height="1" fill="#161616"/><rect x="77.0" y="48.0" width="1" height="1" fill="#161616"/><rect x="77.0" y="50.0" width="1" height="1" fill="#161616"/><rect x="79.0" y="48.0" width="1" height="1" fill="#161616"/><rect x="79.0" y="50.0" width="1" height="1" fill="#161616"/><rect x="77.0" y="79.0" width="1" height="1" fill="#161616"/><rect x="77.0" y="81.0" width="1" height="1" fill="#161616"/><rect x="79.0" y="79.0" width="1" height="1" fill="#161616"/><rect x="79.0" y="81.0" width="1" height="1" fill="#161616"/><rect x="77.0" y="139.0" width="1" height="1" fill="#161616"/><rect x="77.0" y="141.0" width="1" height="1" fill="#161616"/><rect x="79.0" y="139.0" width="1" height="1" fill="#161616"/><rect x="79.0" y="141.0" width="1" height="1" fill="#161616"/><rect x="77.0" y="169.0" width="1" height="1" fill="#161616"/><rect x="77.0" y="171.0" width="1" height="1" fill="#161616"/><rect x="79.0" y="169.0" width="1" height="1" fill="#161616"/><rect x="79.0" y="171.0" width="1" height="1" fill="#161616"/><rect x="77.0" y="200.0" width="1" height="1" fill="#161616"/><rect x="77.0" y="202.0" width="1" height="1" fill="#161616"/><rect x="79.0" y="200.0" width="1" height="1" fill="#161616"/><rect x="79.0" y="202.0" width="1" height="1" fill="#161616"/>

<rect x="138.0" y="18.0" width="1" height="1" fill="#161616"/><rect x="138.0" y="20.0" width="1" height="1" fill="#161616"/><rect x="140.0" y="18.0" width="1" height="1" fill="#161616"/><rect x="140.0" y="20.0" width="1" height="1" fill="#161616"/><rect x="138.0" y="48.0" width="1" height="1" fill="#161616"/><rect x="138.0" y="50.0" width="1" height="1" fill="#161616"/><rect x="140.0" y="48.0" width="1" height="1" fill="#161616"/><rect x="140.0" y="50.0" width="1" height="1" fill="#161616"/><rect x="138.0" y="79.0" width="1" height="1" fill="#161616"/><rect x="138.0" y="81.0" width="1" height="1" fill="#161616"/><rect x="140.0" y="79.0" width="1" height="1" fill="#161616"/><rect x="140.0" y="81.0" width="1" height="1" fill="#161616"/><rect x="138.0" y="139.0" width="1" height="1" fill="#161616"/><rect x="138.0" y="141.0" width="1" height="1" fill="#161616"/><rect x="140.0" y="139.0" width="1" height="1" fill="#161616"/><rect x="140.0" y="141.0" width="1" height="1" fill="#161616"/><rect x="138.0" y="169.0" width="1" height="1" fill="#161616"/><rect x="138.0" y="171.0" width="1" height="1" fill="#161616"/><rect x="140.0" y="169.0" width="1" height="1" fill="#161616"/><rect x="140.0" y="171.0" width="1" height="1" fill="#161616"/><rect x="138.0" y="200.0" width="1" height="1" fill="#161616"/><rect x="138.0" y="202.0" width="1" height="1" fill="#161616"/><rect x="140.0" y="200.0" width="1" height="1" fill="#161616"/><rect x="140.0" y="202.0" width="1" height="1" fill="#161616"/>
<rect x="168.0" y="18.0" width="1" height="1" fill="#161616"/><rect x="168.0" y="20.0" width="1" height="1" fill="#161616"/><rect x="170.0" y="18.0" width="1" height="1" fill="#161616"/><rect x="170.0" y="20.0" width="1" height="1" fill="#161616"/><rect x="168.0" y="48.0" width="1" height="1" fill="#161616"/><rect x="168.0" y="50.0" width="1" height="1" fill="#161616"/><rect x="170.0" y="48.0" width="1" height="1" fill="#161616"/><rect x="170.0" y="50.0" width="1" height="1" fill="#161616"/><rect x="168.0" y="79.0" width="1" height="1" fill="#161616"/><rect x="168.0" y="81.0" width="1" height="1" fill="#161616"/><rect x="170.0" y="79.0" width="1" height="1" fill="#161616"/><rect x="170.0" y="81.0" width="1" height="1" fill="#161616"/><rect x="168.0" y="139.0" width="1" height="1" fill="#161616"/><rect x="168.0" y="141.0" width="1" height="1" fill="#161616"/><rect x="170.0" y="139.0" width="1" height="1" fill="#161616"/><rect x="170.0" y="141.0" width="1" height="1" fill="#161616"/><rect x="168.0" y="169.0" width="1" height="1" fill="#161616"/><rect x="168.0" y="171.0" width="1" height="1" fill="#161616"/><rect x="170.0" y="169.0" width="1" height="1" fill="#161616"/><rect x="170.0" y="171.0" width="1" height="1" fill="#161616"/><rect x="168.0" y="200.0" width="1" height="1" fill="#161616"/><rect x="168.0" y="202.0" width="1" height="1" fill="#161616"/><rect x="170.0" y="200.0" width="1" height="1" fill="#161616"/><rect x="170.0" y="202.0" width="1" height="1" fill="#161616"/>
<rect x="199.0" y="18.0" width="1" height="1" fill="#161616"/><rect x="199.0" y="20.0" width="1" height="1" fill="#161616"/><rect x="201.0" y="18.0" width="1" height="1" fill="#161616"/><rect x="201.0" y="20.0" width="1" height="1" fill="#161616"/><rect x="199.0" y="48.0" width="1" height="1" fill="#161616"/><rect x="199.0" y="50.0" width="1" height="1" fill="#161616"/><rect x="201.0" y="48.0" width="1" height="1" fill="#161616"/><rect x="201.0" y="50.0" width="1" height="1" fill="#161616"/><rect x="199.0" y="79.0" width="1" height="1" fill="#161616"/><rect x="199.0" y="81.0" width="1" height="1" fill="#161616"/><rect x="201.0" y="79.0" width="1" height="1" fill="#161616"/><rect x="201.0" y="81.0" width="1" height="1" fill="#161616"/><rect x="199.0" y="139.0" width="1" height="1" fill="#161616"/><rect x="199.0" y="141.0" width="1" height="1" fill="#161616"/><rect x="201.0" y="139.0" width="1" height="1" fill="#161616"/><rect x="201.0" y="141.0" width="1" height="1" fill="#161616"/><rect x="199.0" y="169.0" width="1" height="1" fill="#161616"/><rect x="199.0" y="171.0" width="1" height="1" fill="#161616"/><rect x="201.0" y="169.0" width="1" height="1" fill="#161616"/><rect x="201.0" y="171.0" width="1" height="1" fill="#161616"/><rect x="199.0" y="200.0" width="1" height="1" fill="#161616"/><rect x="199.0" y="202.0" width="1" height="1" fill="#161616"/><rect x="201.0" y="200.0" width="1" height="1" fill="#161616"/><rect x="201.0" y="202.0" width="1" height="1" fill="#161616"/>
<rect x="229.0" y="18.0" width="1" height="1" fill="#161616"/><rect x="229.0" y="20.0" width="1" height="1" fill="#161616"/><rect x="231.0" y="18.0" width="1" height="1" fill="#161616"/><rect x="231.0" y="20.0" width="1" height="1" fill="#161616"/><rect x="229.0" y="48.0" width="1" height="1" fill="#161616"/><rect x="229.0" y="50.0" width="1" height="1" fill="#161616"/><rect x="231.0" y="48.0" width="1" height="1" fill="#161616"/><rect x="231.0" y="50.0" width="1" height="1" fill="#161616"/><rect x="229.0" y="79.0" width="1" height="1" fill="#161616"/><rect x="229.0" y="81.0" width="1" height="1" fill="#161616"/><rect x="231.0" y="79.0" width="1" height="1" fill="#161616"/><rect x="231.0" y="81.0" width="1" height="1" fill="#161616"/><rect x="229.0" y="139.0" width="1" height="1" fill="#161616"/><rect x="229.0" y="141.0" width="1" height="1" fill="#161616"/><rect x="231.0" y="139.0" width="1" height="1" fill="#161616"/><rect x="231.0" y="141.0" width="1" height="1" fill="#161616"/><rect x="229.0" y="169.0" width="1" height="1" fill="#161616"/><rect x="229.0" y="171.0" width="1" height="1" fill="#161616"/><rect x="231.0" y="169.0" width="1" height="1" fill="#161616"/><rect x="231.0" y="171.0" width="1" height="1" fill="#161616"/><rect x="229.0" y="200.0" width="1" height="1" fill="#161616"/><rect x="229.0" y="202.0" width="1" height="1" fill="#161616"/><rect x="231.0" y="200.0" width="1" height="1" fill="#161616"/><rect x="231.0" y="202.0" width="1" height="1" fill="#161616"/>
<rect x="260.0" y="18.0" width="1" height="1" fill="#161616"/><rect x="260.0" y="20.0" width="1" height="1" fill="#161616"/><rect x="262.0" y="18.0" width="1" height="1" fill="#161616"/><rect x="262.0" y="20.0" width="1" height="1" fill="#161616"/><rect x="260.0" y="48.0" width="1" height="1" fill="#161616"/><rect x="260.0" y="50.0" width="1" height="1" fill="#161616"/><rect x="262.0" y="48.0" width="1" height="1" fill="#161616"/><rect x="262.0" y="50.0" width="1" height="1" fill="#161616"/><rect x="260.0" y="79.0" width="1" height="1" fill="#161616"/><rect x="260.0" y="81.0" width="1" height="1" fill="#161616"/><rect x="262.0" y="79.0" width="1" height="1" fill="#161616"/><rect x="262.0" y="81.0" width="1" height="1" fill="#161616"/><rect x="260.0" y="139.0" width="1" height="1" fill="#161616"/><rect x="260.0" y="141.0" width="1" height="1" fill="#161616"/><rect x="262.0" y="139.0" width="1" height="1" fill="#161616"/><rect x="262.0" y="141.0" width="1" height="1" fill="#161616"/><rect x="260.0" y="169.0" width="1" height="1" fill="#161616"/><rect x="260.0" y="171.0" width="1" height="1" fill="#161616"/><rect x="262.0" y="169.0" width="1" height="1" fill="#161616"/><rect x="262.0" y="171.0" width="1" height="1" fill="#161616"/><rect x="260.0" y="200.0" width="1" height="1" fill="#161616"/><rect x="260.0" y="202.0" width="1" height="1" fill="#161616"/><rect x="262.0" y="200.0" width="1" height="1" fill="#161616"/><rect x="262.0" y="202.0" width="1" height="1" fill="#161616"/>
<rect x="0" y="110" width="287" height="1" fill="#000"/><rect x="109" y="1" width="1" height="219" fill="#000"/><rect x="17" y="100" width="1" height="21" fill="#000"/><rect x="16" y="109" width="3" height="3" fill="#000"/><rect x="47" y="100" width="1" height="21" fill="#000"/><rect x="46" y="109" width="3" height="3" fill="#000"/><rect x="78" y="100" width="1" height="21" fill="#000"/><rect x="77" y="109" width="3" height="3" fill="#000"/><rect x="139" y="100" width="1" height="21" fill="#000"/><rect x="138" y="109" width="3" height="3" fill="#000"/><rect x="169" y="100" width="1" height="21" fill="#000"/><rect x="168" y="109" width="3" height="3" fill="#000"/><rect x="200" y="100" width="1" height="21" fill="#000"/><rect x="199" y="109" width="3" height="3" fill="#000"/><rect x="230" y="100" width="1" height="21" fill="#000"/><rect x="229" y="109" width="3" height="3" fill="#000"/><rect x="261" y="100" width="1" height="21" fill="#000"/><rect x="260" y="109" width="3" height="3" fill="#000"/><rect x="104" y="19" width="11" height="1" fill="#000"/><rect x="108" y="18" width="3" height="3" fill="#000"/><rect x="104" y="49" width="11" height="1" fill="#000"/><rect x="108" y="48" width="3" height="3" fill="#000"/><rect x="104" y="80" width="11" height="1" fill="#000"/><rect x="108" y="79" width="3" height="3" fill="#000"/><rect x="104" y="110" width="11" height="1" fill="#000"/><rect x="108" y="109" width="3" height="3" fill="#000"/><rect x="104" y="140" width="11" height="1" fill="#000"/><rect x="108" y="139" width="3" height="3" fill="#000"/><rect x="104" y="170" width="11" height="1" fill="#000"/><rect x="108" y="169" width="3" height="3" fill="#000"/><rect x="104" y="201" width="11" height="1" fill="#000"/><rect x="108" y="200" width="3" height="3" fill="#000"/></svg>
<svg style="left:0;top:0" width="287" height="218">
<polyline fill="none" stroke="#0000ff" stroke-width="1.3" stroke-linejoin="miter" points="109.5,54.3 133,68.3 84.4,96.1 133,123.5 84.4,151.1 109.5,165.0"/>
<rect x="104.2" y="44.00" width="8.8" height="9" fill="#fff" stroke="#000" stroke-width="1.7"/><g fill="#222" shape-rendering="crispEdges"><rect x="108" y="48" width="1" height="1"/><rect x="110" y="48" width="1" height="1"/><rect x="109" y="49" width="1" height="1"/><rect x="108" y="50" width="1" height="1"/><rect x="110" y="50" width="1" height="1"/><rect x="114" y="49" width="1" height="1" fill="#000"/></g><rect x="104.2" y="166.05" width="8.8" height="9" fill="#fff" stroke="#000" stroke-width="1.7"/><g fill="#222" shape-rendering="crispEdges"><rect x="108" y="170" width="1" height="1"/><rect x="110" y="170" width="1" height="1"/><rect x="109" y="171" width="1" height="1"/><rect x="108" y="172" width="1" height="1"/><rect x="110" y="172" width="1" height="1"/><rect x="114" y="171" width="1" height="1" fill="#000"/></g></svg>
<div class="t" style="left:139.80px;top:42.05px;font-size:49.5px;transform:scaleX(0.905);transform-origin:0 0;">R</div>
<div class="t" style="left:141.50px;top:133.05px;font-size:49.5px;letter-spacing:1.381px;">&lt;val&gt;</div>
</div>
<div class="a" style="left:287px;top:89px;width:4px;height:899px;background:#eaecf9;"></div>
<div class="a" style="left:0px;top:988px;width:951px;height:1px;background:#d6d6d6;"></div>
<div class="a" style="left:0px;top:989px;width:951px;height:2px;background:#f0f0f0;"></div>
<!-- schematic view -->
<div class="a" style="left:291px;top:89px;width:658px;height:725px;background:#ffffe8;border-left:2px solid #6b6b6b;border-top:1px solid #6a6a6a;"></div>
<div class="a" style="left:949px;top:89px;width:1px;height:725px;background:#e2e2e6;"></div>
<div class="a" style="left:291px;top:814px;width:660px;height:2px;background:#fbfbfe;"></div>
<div class="a" style="left:291px;top:816px;width:660px;height:4px;background:#eaecf9;"></div>
<svg style="left:0;top:0" width="951" height="820">
<path d="M391 407.5 V337 H435.5" fill="none" stroke="#0000ff" stroke-width="1.55" stroke-linejoin="miter"/>
<path d="M473.5 337 H573.2" fill="none" stroke="#0000ff" stroke-width="1.55" stroke-linejoin="miter"/>
<path d="M611.6 337 H666.5 V402.7 L674.9 407.2 L658 416.9 L674.9 426.5 L658 436.2 L666.5 441.4 V496 H391 V436" fill="none" stroke="#0000ff" stroke-width="1.55" stroke-linejoin="miter"/>
<path d="M528.7 337 V417.5 M528.7 426.5 V506.5" fill="none" stroke="#0000ff" stroke-width="1.55" stroke-linejoin="miter"/>
<path d="M432 337 H435 C435.9 331.5 438.6 328.4 442.4 328.4 C446.59999999999997 328.4 450.09999999999997 334.5 450.09999999999997 340.6 C450.09999999999997 343.8 449.4 345.8 448.4 345.8 C447.4 345.8 446.7 343.8 446.7 340.6 C446.7 334.5 450.1 328.4 454.3 328.4 C458.5 328.4 462.09999999999997 334.5 462.09999999999997 340.6 C462.09999999999997 343.8 461.4 345.8 460.4 345.8 C459.4 345.8 458.7 343.8 458.7 340.6 C458.7 334.5 462.2 328.4 466.4 328.4 C470.2 328.4 473.0 331.5 473.9 337 H477" fill="none" stroke="#0000ff" stroke-width="1.55" stroke-linejoin="round"/>
<path d="M570 337 H573 C573.9 331.5 576.6 328.4 580.4 328.4 C584.6 328.4 588.1 334.5 588.1 340.6 C588.1 343.8 587.4 345.8 586.4 345.8 C585.4 345.8 584.6999999999999 343.8 584.6999999999999 340.6 C584.6999999999999 334.5 588.0999999999999 328.4 592.3 328.4 C596.5 328.4 600.1 334.5 600.1 340.6 C600.1 343.8 599.4 345.8 598.4 345.8 C597.4 345.8 596.6999999999999 343.8 596.6999999999999 340.6 C596.6999999999999 334.5 600.1999999999999 328.4 604.4 328.4 C608.2 328.4 611.0 331.5 611.9 337 H615" fill="none" stroke="#0000ff" stroke-width="1.55" stroke-linejoin="round"/>
<path d="M514 418.6 H543.4 M514 425.6 H543.4" stroke="#0000ff" stroke-width="3" fill="none"/>
<circle cx="528.7" cy="337" r="2.6" fill="#0000ff"/><circle cx="528.7" cy="496" r="2.6" fill="#0000ff"/>
<path d="M519.8 506.6 H537.7 L528.7 515.2 Z" fill="none" stroke="#0000ff" stroke-width="1.5"/>
<circle cx="391" cy="421.7" r="14" fill="none" stroke="#0000ff" stroke-width="1.45"/>
<path d="M387.8 414.4 H394.2 M391 411.2 V417.6 M387.8 429.9 H394.2" stroke="#0000ff" stroke-width="2" fill="none"/>
<circle cx="401.4" cy="337.6" r="1.3" fill="#ff0000"/><circle cx="666" cy="369" r="1.2" fill="#ff0000"/>
</svg>
<div class="t" style="left:396.00px;top:320.80px;font-size:16px;color:#ff0000;letter-spacing:0.173px;">in</div>
<div class="t" style="left:666.60px;top:362.80px;font-size:16px;color:#ff0000;letter-spacing:0.719px;">out</div>
<div class="t" style="left:445.60px;top:312.80px;font-size:16px;letter-spacing:-0.149px;">L1</div>
<div class="t" style="left:431.00px;top:349.80px;font-size:16px;letter-spacing:-0.030px;">130nH</div>
<div class="t" style="left:583.20px;top:312.80px;font-size:16px;letter-spacing:0.201px;">L2</div>
<div class="t" style="left:569.00px;top:349.80px;font-size:16px;letter-spacing:0.050px;">220nH</div>
<div class="t" style="left:401.60px;top:399.80px;font-size:16px;letter-spacing:-0.536px;">V1</div>
<div class="t" style="left:400.40px;top:431.80px;font-size:16px;letter-spacing:0.170px;">sin 0 2 freq</div>
<div class="t" style="left:538.70px;top:399.80px;font-size:16px;letter-spacing:-0.577px;">C1</div>
<div class="t" style="left:538.90px;top:431.80px;font-size:16px;letter-spacing:-0.242px;">20pF</div>
<div class="t" style="left:676.40px;top:399.80px;font-size:16px;letter-spacing:-0.577px;">R1</div>
<div class="t" style="left:676.90px;top:431.80px;font-size:16px;letter-spacing:0.255px;">50ohm</div>
<div class="t" style="left:448.70px;top:563.80px;font-size:16px;letter-spacing:0.280px;">.tran 0 100/freq</div>
<div class="t" style="left:448.70px;top:611.80px;font-size:16px;letter-spacing:0.140px;">.param freq=160Meg</div>
<div class="t" style="left:453.80px;top:659.80px;font-size:16px;letter-spacing:0.014px;">.step dec param freq 1 1G 50</div>
<div class="t" style="left:453.80px;top:701.80px;font-size:16px;letter-spacing:0.217px;">.meas gain fra freq V(in) V(out) from 1/freq</div>
<!-- output window -->
<div class="a" style="left:291px;top:820px;width:660px;height:29px;background:linear-gradient(#bccbdb,#d4e1ee);"></div>
<div class="t" style="left:294.40px;top:826.30px;font-size:15px;letter-spacing:-0.181px;">Output Window</div>
<svg style="left:915.6px;top:831.8px" width="13" height="7"><path d="M0.5 0.5 H11.5 L6 6.5 Z" fill="#000"/></svg>
<svg style="left:934.4px;top:829.4px" width="12" height="11"><path d="M1 1 L10.4 10 M10.4 1 L1 10" stroke="#000" stroke-width="1.9" fill="none"/></svg>
<div class="a" style="left:291px;top:849px;width:660px;height:110px;background:#f0f0f0;border-left:1.5px solid #8e8e8e;border-top:1.5px solid #9a9a9a;border-bottom:1.3px solid #8a8a8a;"></div>
<div class="a" style="left:293px;top:851px;width:635px;height:86px;background:#f5f5f5;"></div>
<div class="a" style="left:293px;top:936px;width:635px;height:2px;background:#fafafa;"></div>
<div class="t" style="left:364.80px;top:855.80px;font-size:20px;font-weight:bold;font-family:'Liberation Mono',monospace;letter-spacing:-0.01px;">−68.1203dB 90.3766°</div>
<div class="t" style="left:364.80px;top:878.80px;font-size:20px;font-weight:bold;font-family:'Liberation Mono',monospace;letter-spacing:-0.01px;">−69.3091dB 90.5673°</div>
<div class="a" style="left:936px;top:895px;width:3px;height:21px;background:#8a8a8a;border-radius:1.5px;"></div>
<svg style="left:299px;top:943px" width="8" height="9"><path d="M7.5 0.3 V8.7 L0.3 4.5 Z" fill="#a6a6a6"/></svg>
<svg style="left:912.6px;top:943px" width="8" height="9"><path d="M0.5 0.3 V8.7 L7.7 4.5 Z" fill="#a6a6a6"/></svg>
<div class="a" style="left:291px;top:959px;width:660px;height:29px;background:#f0f0f0;"></div>
<svg style="left:292px;top:957px" width="300" height="30">
<path d="M75.7 1.2 L87.9 27.2 H157.7 L163.8 16" fill="#f0f0f0" stroke="#6e6e6e" stroke-width="1.2"/>
<path d="M159.2 0.6 L172.1 27.2 H254.9 L267.8 0.6 Z" fill="#ffffff" stroke="none"/>
<path d="M159.2 1.2 L172.1 27.2 H254.9 L267.8 1.2" fill="none" stroke="#6e6e6e" stroke-width="1.2"/>
<path d="M4.7 11.2 H6.9 V19.6 H4.7 Z M12.9 11 V19.8 L7.6 15.4 Z M29.9 11 V19.8 L24.6 15.4 Z M43.7 11 V19.8 L49 15.4 Z M60.7 11 V19.8 L66 15.4 Z M66.7 11.2 H68.9 V19.6 H66.7 Z" fill="#1a1a1a"/>
</svg>
<div class="t" style="left:381.70px;top:964.20px;font-size:14.2px;letter-spacing:-0.170px;">Simulation</div>
<div class="t" style="left:463.00px;top:964.20px;font-size:14.2px;font-weight:bold;letter-spacing:-0.448px;">Post Process</div>
<!-- waveform viewer -->
<div class="a" style="left:954px;top:89px;width:955px;height:897px;background:#000;"></div>
<div class="a" style="left:954px;top:89px;width:1px;height:897px;background:#3a3a3a;"></div>
<div class="a" style="left:1909px;top:89px;width:1px;height:897px;background:#fff;"></div>
<div class="a" style="left:953px;top:986px;width:957px;height:2px;background:#fff;"></div>
<div class="a" style="left:953px;top:988px;width:957px;height:1px;background:#d8d8d8;"></div>
<div class="a" style="left:953px;top:989px;width:957px;height:2px;background:#f0f0f0;"></div>
<svg style="left:0;top:0" width="1910" height="991" shape-rendering="crispEdges"><defs><pattern id="chk" width="2" height="2" patternUnits="userSpaceOnUse"><rect x="0" y="0" width="1" height="1" fill="#fff"/><rect x="1" y="1" width="1" height="1" fill="#fff"/></pattern></defs>
<rect x="955" y="90" width="954" height="1" fill="url(#chk)"/><rect x="955" y="985" width="953" height="1" fill="url(#chk)"/><rect x="955" y="90" width="1" height="896" fill="url(#chk)"/><rect x="1908" y="90" width="1" height="895" fill="url(#chk)"/></svg>
<svg style="left:0;top:0" width="1910" height="991">
<g fill="#dcdcdc" shape-rendering="crispEdges">
<rect x="1062" y="101" width="2" height="858"/><rect x="1835" y="101" width="2" height="858"/><rect x="1052" y="949" width="785" height="2"/><rect x="1052" y="101" width="797" height="2"/>
<rect x="1052" y="271" width="10" height="2"/><rect x="1052" y="440" width="10" height="2"/><rect x="1052" y="610" width="10" height="2"/><rect x="1052" y="779" width="10" height="2"/><rect x="1837" y="131" width="12" height="2"/><rect x="1837" y="162" width="12" height="2"/><rect x="1837" y="192" width="12" height="2"/><rect x="1837" y="222" width="12" height="2"/><rect x="1837" y="252" width="12" height="2"/><rect x="1837" y="283" width="12" height="2"/><rect x="1837" y="313" width="12" height="2"/><rect x="1837" y="343" width="12" height="2"/><rect x="1837" y="374" width="12" height="2"/><rect x="1837" y="404" width="12" height="2"/><rect x="1837" y="434" width="12" height="2"/><rect x="1837" y="464" width="12" height="2"/><rect x="1837" y="495" width="12" height="2"/><rect x="1837" y="525" width="12" height="2"/><rect x="1837" y="555" width="12" height="2"/><rect x="1837" y="586" width="12" height="2"/><rect x="1837" y="616" width="12" height="2"/><rect x="1837" y="646" width="12" height="2"/><rect x="1837" y="676" width="12" height="2"/><rect x="1837" y="707" width="12" height="2"/><rect x="1837" y="737" width="12" height="2"/><rect x="1837" y="767" width="12" height="2"/><rect x="1837" y="798" width="12" height="2"/><rect x="1837" y="828" width="12" height="2"/><rect x="1837" y="858" width="12" height="2"/><rect x="1837" y="888" width="12" height="2"/><rect x="1837" y="919" width="12" height="2"/><rect x="1837" y="949" width="12" height="2"/>
<rect x="1088" y="951" width="2" height="6"/><rect x="1103" y="951" width="2" height="6"/><rect x="1114" y="951" width="2" height="6"/><rect x="1122" y="951" width="2" height="6"/><rect x="1129" y="951" width="2" height="6"/><rect x="1135" y="951" width="2" height="6"/><rect x="1140" y="951" width="2" height="6"/><rect x="1144" y="951" width="2" height="6"/><rect x="1148" y="951" width="2" height="8"/><rect x="1174" y="951" width="2" height="6"/><rect x="1189" y="951" width="2" height="6"/><rect x="1200" y="951" width="2" height="6"/><rect x="1208" y="951" width="2" height="6"/><rect x="1215" y="951" width="2" height="6"/><rect x="1220" y="951" width="2" height="6"/><rect x="1225" y="951" width="2" height="6"/><rect x="1230" y="951" width="2" height="6"/><rect x="1234" y="951" width="2" height="8"/><rect x="1260" y="951" width="2" height="6"/><rect x="1275" y="951" width="2" height="6"/><rect x="1285" y="951" width="2" height="6"/><rect x="1294" y="951" width="2" height="6"/><rect x="1301" y="951" width="2" height="6"/><rect x="1306" y="951" width="2" height="6"/><rect x="1311" y="951" width="2" height="6"/><rect x="1316" y="951" width="2" height="6"/><rect x="1320" y="951" width="2" height="8"/><rect x="1346" y="951" width="2" height="6"/><rect x="1361" y="951" width="2" height="6"/><rect x="1371" y="951" width="2" height="6"/><rect x="1380" y="951" width="2" height="6"/><rect x="1387" y="951" width="2" height="6"/><rect x="1392" y="951" width="2" height="6"/><rect x="1397" y="951" width="2" height="6"/><rect x="1402" y="951" width="2" height="6"/><rect x="1406" y="951" width="2" height="8"/><rect x="1431" y="951" width="2" height="6"/><rect x="1447" y="951" width="2" height="6"/><rect x="1457" y="951" width="2" height="6"/><rect x="1466" y="951" width="2" height="6"/><rect x="1472" y="951" width="2" height="6"/><rect x="1478" y="951" width="2" height="6"/><rect x="1483" y="951" width="2" height="6"/><rect x="1488" y="951" width="2" height="6"/><rect x="1491" y="951" width="2" height="8"/><rect x="1517" y="951" width="2" height="6"/><rect x="1532" y="951" width="2" height="6"/><rect x="1543" y="951" width="2" height="6"/><rect x="1551" y="951" width="2" height="6"/><rect x="1558" y="951" width="2" height="6"/><rect x="1564" y="951" width="2" height="6"/><rect x="1569" y="951" width="2" height="6"/><rect x="1573" y="951" width="2" height="6"/><rect x="1577" y="951" width="2" height="8"/><rect x="1603" y="951" width="2" height="6"/><rect x="1618" y="951" width="2" height="6"/><rect x="1629" y="951" width="2" height="6"/><rect x="1637" y="951" width="2" height="6"/><rect x="1644" y="951" width="2" height="6"/><rect x="1650" y="951" width="2" height="6"/><rect x="1655" y="951" width="2" height="6"/><rect x="1659" y="951" width="2" height="6"/><rect x="1663" y="951" width="2" height="8"/><rect x="1689" y="951" width="2" height="6"/><rect x="1704" y="951" width="2" height="6"/><rect x="1715" y="951" width="2" height="6"/><rect x="1723" y="951" width="2" height="6"/><rect x="1730" y="951" width="2" height="6"/><rect x="1736" y="951" width="2" height="6"/><rect x="1741" y="951" width="2" height="6"/><rect x="1745" y="951" width="2" height="6"/><rect x="1749" y="951" width="2" height="8"/><rect x="1775" y="951" width="2" height="6"/><rect x="1790" y="951" width="2" height="6"/><rect x="1801" y="951" width="2" height="6"/><rect x="1809" y="951" width="2" height="6"/><rect x="1816" y="951" width="2" height="6"/><rect x="1822" y="951" width="2" height="6"/><rect x="1827" y="951" width="2" height="6"/><rect x="1831" y="951" width="2" height="6"/></g>
<polyline fill="none" stroke="#00d400" stroke-width="1.35" stroke-dasharray="1.2 1.8" points="1063.0,102.0 1509.6,103.2 1545.7,105.2 1564.6,107.3 1578.3,109.6 1588.6,112.1 1597.2,114.7 1604.1,117.2 1609.3,119.4 1614.4,122.0 1619.6,124.9 1624.7,128.3 1628.1,130.8 1631.6,133.5 1635.0,136.5 1638.5,139.7 1641.9,143.2 1645.3,147.0 1648.8,151.2 1652.2,155.7 1655.6,160.5 1659.1,165.7 1662.5,171.3 1665.9,177.2 1669.4,183.6 1672.8,190.3 1676.2,197.3 1679.7,204.7 1683.1,212.4 1686.6,220.3 1693.4,236.7 1705.4,265.8 1710.6,278.0 1715.8,289.8 1720.9,301.2 1727.8,315.7 1734.7,330.0 1736.4,333.7 1738.1,337.5 1739.8,341.5 1741.5,345.7 1743.2,350.3 1745.0,355.4 1746.7,361.4 1748.4,368.6 1750.1,378.0 1751.8,391.2 1753.5,412.0 1755.3,451.0 1757.0,537.5 1758.7,681.8 1760.4,774.6 1762.1,816.0 1763.9,837.5 1765.6,850.7 1767.3,859.7 1769.0,866.4 1770.7,871.6 1772.4,875.8 1774.2,879.3 1775.9,882.3 1777.6,885.0 1779.3,887.3 1781.0,889.4 1782.7,891.3 1784.5,893.1 1786.2,894.7 1787.9,896.2 1791.3,898.8 1794.8,901.2 1798.2,903.3 1803.4,906.0 1810.2,909.2 1818.8,912.5 1836.0,917.9"/>
<polyline fill="none" stroke="#00f400" stroke-width="1.6" stroke-linejoin="round" points="1063.0,271.6 1619.6,272.2 1638.5,273.2 1648.8,274.3 1655.6,275.4 1662.5,277.0 1667.7,278.5 1672.8,280.4 1676.2,281.9 1679.7,283.6 1683.1,285.5 1686.6,287.7 1690.0,290.1 1693.4,292.8 1696.9,295.7 1702.0,300.3 1719.2,317.7 1722.6,321.0 1724.3,322.5 1726.1,323.9 1727.8,325.2 1729.5,326.3 1731.2,327.3 1732.9,328.0 1734.7,328.5 1736.4,328.7 1738.1,328.5 1739.8,327.8 1741.5,326.5 1743.2,324.6 1745.0,321.8 1746.7,317.8 1748.4,312.3 1750.1,304.7 1751.8,294.2 1753.5,279.4 1755.3,258.5 1757.0,234.5 1758.7,239.0 1760.4,275.8 1762.1,310.7 1763.9,339.3 1765.6,363.5 1767.3,384.6 1769.0,403.6 1770.7,421.0 1772.4,437.3 1774.2,452.6 1775.9,467.2 1777.6,481.2 1779.3,494.7 1781.0,507.8 1782.7,520.5 1784.5,532.9 1786.2,545.1 1787.9,557.1 1789.6,568.9 1791.3,580.5 1793.1,592.0 1794.8,603.3 1798.2,625.7 1801.6,647.7 1805.1,669.5 1810.2,701.7 1817.1,744.2 1836.0,859.3"/>
</svg>
<div class="t" style="left:1005.65px;top:93.15px;font-size:20.3px;color:#e2e2e2;letter-spacing:-0.415px;">20dB</div>
<div class="t" style="left:1016.54px;top:263.15px;font-size:20.3px;color:#e2e2e2;letter-spacing:-0.421px;">0dB</div>
<div class="t" style="left:999.12px;top:432.15px;font-size:20.3px;color:#e2e2e2;letter-spacing:-0.379px;">-20dB</div>
<div class="t" style="left:999.12px;top:602.15px;font-size:20.3px;color:#e2e2e2;letter-spacing:-0.379px;">-40dB</div>
<div class="t" style="left:999.12px;top:771.15px;font-size:20.3px;color:#e2e2e2;letter-spacing:-0.379px;">-60dB</div>
<div class="t" style="left:999.12px;top:941.15px;font-size:20.3px;color:#e2e2e2;letter-spacing:-0.379px;">-80dB</div>
<div class="t" style="left:1876.30px;top:93.15px;font-size:20.3px;color:#e2e2e2;letter-spacing:2.0px;">0°</div>
<div class="t" style="left:1858.50px;top:123.15px;font-size:20.3px;color:#e2e2e2;letter-spacing:0.57px;">-10°</div>
<div class="t" style="left:1858.50px;top:153.15px;font-size:20.3px;color:#e2e2e2;letter-spacing:0.57px;">-20°</div>
<div class="t" style="left:1858.50px;top:184.15px;font-size:20.3px;color:#e2e2e2;letter-spacing:0.57px;">-30°</div>
<div class="t" style="left:1858.50px;top:214.15px;font-size:20.3px;color:#e2e2e2;letter-spacing:0.57px;">-40°</div>
<div class="t" style="left:1858.50px;top:244.15px;font-size:20.3px;color:#e2e2e2;letter-spacing:0.57px;">-50°</div>
<div class="t" style="left:1858.50px;top:275.15px;font-size:20.3px;color:#e2e2e2;letter-spacing:0.57px;">-60°</div>
<div class="t" style="left:1858.50px;top:305.15px;font-size:20.3px;color:#e2e2e2;letter-spacing:0.57px;">-70°</div>
<div class="t" style="left:1858.50px;top:335.15px;font-size:20.3px;color:#e2e2e2;letter-spacing:0.57px;">-80°</div>
<div class="t" style="left:1858.50px;top:365.15px;font-size:20.3px;color:#e2e2e2;letter-spacing:0.57px;">-90°</div>
<div class="t" style="left:1849.40px;top:396.15px;font-size:20.3px;color:#e2e2e2;letter-spacing:-0.09px;">-100°</div>
<div class="t" style="left:1849.40px;top:426.15px;font-size:20.3px;color:#e2e2e2;letter-spacing:-0.09px;">-110°</div>
<div class="t" style="left:1849.40px;top:456.15px;font-size:20.3px;color:#e2e2e2;letter-spacing:-0.09px;">-120°</div>
<div class="t" style="left:1849.40px;top:487.15px;font-size:20.3px;color:#e2e2e2;letter-spacing:-0.09px;">-130°</div>
<div class="t" style="left:1849.40px;top:517.15px;font-size:20.3px;color:#e2e2e2;letter-spacing:-0.09px;">-140°</div>
<div class="t" style="left:1849.40px;top:547.15px;font-size:20.3px;color:#e2e2e2;letter-spacing:-0.09px;">-150°</div>
<div class="t" style="left:1849.40px;top:577.15px;font-size:20.3px;color:#e2e2e2;letter-spacing:-0.09px;">-160°</div>
<div class="t" style="left:1849.40px;top:608.15px;font-size:20.3px;color:#e2e2e2;letter-spacing:-0.09px;">-170°</div>
<div class="t" style="left:1849.40px;top:638.15px;font-size:20.3px;color:#e2e2e2;letter-spacing:-0.09px;">-180°</div>
<div class="t" style="left:1849.40px;top:668.15px;font-size:20.3px;color:#e2e2e2;letter-spacing:-0.09px;">-190°</div>
<div class="t" style="left:1849.40px;top:699.15px;font-size:20.3px;color:#e2e2e2;letter-spacing:-0.09px;">-200°</div>
<div class="t" style="left:1849.40px;top:729.15px;font-size:20.3px;color:#e2e2e2;letter-spacing:-0.09px;">-210°</div>
<div class="t" style="left:1849.40px;top:759.15px;font-size:20.3px;color:#e2e2e2;letter-spacing:-0.09px;">-220°</div>
<div class="t" style="left:1849.40px;top:789.15px;font-size:20.3px;color:#e2e2e2;letter-spacing:-0.09px;">-230°</div>
<div class="t" style="left:1849.40px;top:820.15px;font-size:20.3px;color:#e2e2e2;letter-spacing:-0.09px;">-240°</div>
<div class="t" style="left:1849.40px;top:850.15px;font-size:20.3px;color:#e2e2e2;letter-spacing:-0.09px;">-250°</div>
<div class="t" style="left:1849.40px;top:880.15px;font-size:20.3px;color:#e2e2e2;letter-spacing:-0.09px;">-260°</div>
<div class="t" style="left:1849.40px;top:911.15px;font-size:20.3px;color:#e2e2e2;letter-spacing:-0.09px;">-270°</div>
<div class="t" style="left:1849.40px;top:941.15px;font-size:20.3px;color:#e2e2e2;letter-spacing:-0.09px;">-280°</div>
<div class="t" style="left:1047.50px;top:962.15px;font-size:20.3px;color:#e2e2e2;letter-spacing:-0.690px;">10</div>
<div class="t" style="left:1069.90px;top:963.00px;font-size:12.6px;color:#e2e2e2;">0</div>
<div class="t" style="left:1133.39px;top:962.15px;font-size:20.3px;color:#e2e2e2;letter-spacing:-0.690px;">10</div>
<div class="t" style="left:1155.79px;top:963.00px;font-size:12.6px;color:#e2e2e2;">1</div>
<div class="t" style="left:1219.28px;top:962.15px;font-size:20.3px;color:#e2e2e2;letter-spacing:-0.690px;">10</div>
<div class="t" style="left:1241.68px;top:963.00px;font-size:12.6px;color:#e2e2e2;">2</div>
<div class="t" style="left:1305.17px;top:962.15px;font-size:20.3px;color:#e2e2e2;letter-spacing:-0.690px;">10</div>
<div class="t" style="left:1327.57px;top:963.00px;font-size:12.6px;color:#e2e2e2;">3</div>
<div class="t" style="left:1391.06px;top:962.15px;font-size:20.3px;color:#e2e2e2;letter-spacing:-0.690px;">10</div>
<div class="t" style="left:1413.46px;top:963.00px;font-size:12.6px;color:#e2e2e2;">4</div>
<div class="t" style="left:1476.94px;top:962.15px;font-size:20.3px;color:#e2e2e2;letter-spacing:-0.690px;">10</div>
<div class="t" style="left:1499.34px;top:963.00px;font-size:12.6px;color:#e2e2e2;">5</div>
<div class="t" style="left:1562.83px;top:962.15px;font-size:20.3px;color:#e2e2e2;letter-spacing:-0.690px;">10</div>
<div class="t" style="left:1585.23px;top:963.00px;font-size:12.6px;color:#e2e2e2;">6</div>
<div class="t" style="left:1648.72px;top:962.15px;font-size:20.3px;color:#e2e2e2;letter-spacing:-0.690px;">10</div>
<div class="t" style="left:1671.12px;top:963.00px;font-size:12.6px;color:#e2e2e2;">7</div>
<div class="t" style="left:1734.61px;top:962.15px;font-size:20.3px;color:#e2e2e2;letter-spacing:-0.690px;">10</div>
<div class="t" style="left:1757.01px;top:963.00px;font-size:12.6px;color:#e2e2e2;">8</div>
<div class="t" style="left:1820.50px;top:962.15px;font-size:20.3px;color:#e2e2e2;letter-spacing:-0.690px;">10</div>
<div class="t" style="left:1842.90px;top:963.00px;font-size:12.6px;color:#e2e2e2;">9</div>
<div class="t" style="left:929.8px;top:511.0px;width:100px;height:30px;line-height:30px;text-align:center;font-family:'Liberation Mono',monospace;font-weight:bold;font-size:28.2px;letter-spacing:0.1px;color:#00ff00;transform:rotate(-90deg)">GAIN</div>
</body></html>
